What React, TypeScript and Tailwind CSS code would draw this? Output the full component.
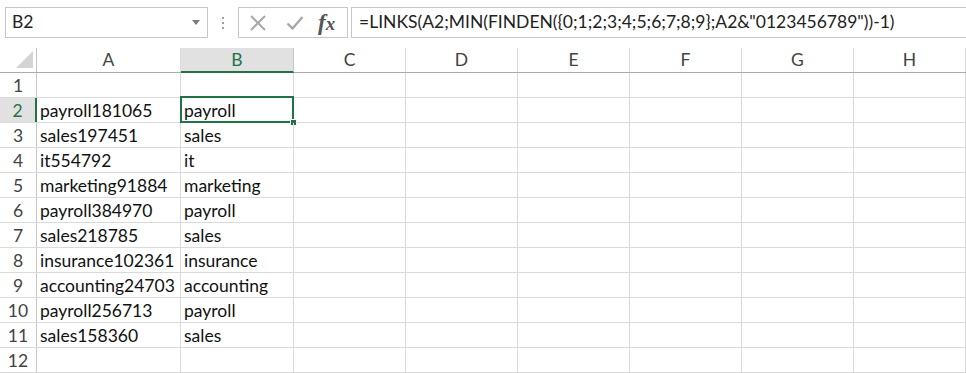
import React from 'react';

const font = "font-['Lato','Open_Sans',sans-serif]";

const columns = [
  { id: 'A', width: 'w-[144px]' },
  { id: 'B', width: 'w-[113px]' },
  { id: 'C', width: 'w-[112px]' },
  { id: 'D', width: 'w-[112px]' },
  { id: 'E', width: 'w-[112px]' },
  { id: 'F', width: 'w-[112px]' },
  { id: 'G', width: 'w-[112px]' },
  { id: 'H', width: 'w-[112px]' },
];

const rows: [string, string][] = [
  ['', ''],
  ['payroll181065', 'payroll'],
  ['sales197451', 'sales'],
  ['it554792', 'it'],
  ['marketing91884', 'marketing'],
  ['payroll384970', 'payroll'],
  ['sales218785', 'sales'],
  ['insurance102361', 'insurance'],
  ['accounting24703', 'accounting'],
  ['payroll256713', 'payroll'],
  ['sales158360', 'sales'],
  ['', ''],
];

const FormulaBar = () => (
  <div className="flex h-[48px] items-start bg-white pt-[7px] pl-[5px]">
    {/* Name box */}
    <div className="flex h-[31px] w-[203px] items-center justify-between border border-[#c6c6c6] pl-[6px] pr-[7px]">
      <span className="text-[17.5px] text-[#222]">B2</span>
      <svg width="8" height="5" viewBox="0 0 8 5">
        <path d="M0 0h8L4 5z" fill="#7a7a7a" />
      </svg>
    </div>
    {/* Grip dots */}
    <div className="flex h-[31px] w-[30px] flex-col items-center justify-center gap-[3px]">
      <span className="h-[2px] w-[2px] bg-[#a0a0a0]" />
      <span className="h-[2px] w-[2px] bg-[#a0a0a0]" />
      <span className="h-[2px] w-[2px] bg-[#a0a0a0]" />
    </div>
    {/* Cancel / Enter / fx */}
    <div className="flex h-[31px] w-[110px] items-center border border-[#c6c6c6] pl-[10px]">
      <svg width="18" height="18" viewBox="0 0 18 18" className="mr-[19px]">
        <path d="M2 2L16 16M16 2L2 16" stroke="#a8a8a8" strokeWidth="2" />
      </svg>
      <svg width="18" height="16" viewBox="0 0 18 16" className="mr-[14px]">
        <path d="M1.5 8.5L6.5 13.5L16.5 2" stroke="#a8a8a8" strokeWidth="2.4" fill="none" />
      </svg>
      <span className="font-['Liberation_Serif',serif] text-[23px] font-bold italic leading-none text-[#555]">
        f<span className="text-[19px]">x</span>
      </span>
    </div>
    {/* Formula input */}
    <div className="ml-[3px] flex h-[31px] flex-1 items-center border-y border-l border-[#c6c6c6] pl-[7px]">
      <span className="whitespace-pre text-[17.5px] text-[#222]">
        =LINKS(A2;MIN(FINDEN({'{'}0;1;2;3;4;5;6;7;8;9{'}'};A2&amp;"0123456789"))-1)
      </span>
    </div>
  </div>
);

const HeaderRow = () => (
  <div className="flex h-[25px] border-b border-[#ababab]">
    <div className="flex w-[37px] items-end justify-end border-r border-[#c6c6c6] pr-[3px] pb-[4px]">
      <div className="h-[17px] w-[17px] bg-[#d4d4d4] [clip-path:polygon(100%_0,100%_100%,0_100%)]" />
    </div>
    {columns.map((c) =>
      c.id === 'B' ? (
        <div
          key={c.id}
          className={`${c.width} -mb-px flex items-center justify-center border-r border-b-2 border-r-[#c6c6c6] border-b-[#217346] bg-[#e1e1e1] pt-px text-[17.5px] text-[#217346]`}
        >
          {c.id}
        </div>
      ) : (
        <div
          key={c.id}
          className={`${c.width} flex items-center justify-center border-r border-[#dadada] pt-px text-[17.5px] text-[#444]`}
        >
          {c.id}
        </div>
      )
    )}
  </div>
);

export default function App() {
  return (
    <div className={`${font} h-[373px] w-[966px] overflow-hidden bg-white`}>
      <FormulaBar />
      <HeaderRow />
      {rows.map(([a, b], i) => {
        const n = i + 1;
        const active = n === 2;
        return (
          <div key={n} className="flex h-[25px] border-b border-[#dadada]">
            <div
              className={
                active
                  ? 'flex w-[37px] items-center justify-center border-r-2 border-[#217346] bg-[#e1e1e1] pt-[2px] text-[17.5px] text-[#217346]'
                  : 'flex w-[37px] items-center justify-center border-r border-[#c6c6c6] pt-[2px] text-[17.5px] text-[#444]'
              }
            >
              {n}
            </div>
            {columns.map((c) => (
              <div
                key={c.id}
                className={`${c.width} relative flex items-center border-r border-[#dadada] pt-[2px] pl-[3px] text-[17.5px] text-[#111]`}
              >
                <span className="whitespace-nowrap">{c.id === 'A' ? a : c.id === 'B' ? b : ''}</span>
                {active && c.id === 'B' && (
                  <>
                    <div className="pointer-events-none absolute top-[-2px] right-[-1px] bottom-[-1px] left-[-1px] border-2 border-[#217346]" />
                    <div className="absolute right-[-4px] bottom-[-4px] h-[7px] w-[7px] border border-white bg-[#217346]" />
                  </>
                )}
              </div>
            ))}
          </div>
        );
      })}
    </div>
  );
}
